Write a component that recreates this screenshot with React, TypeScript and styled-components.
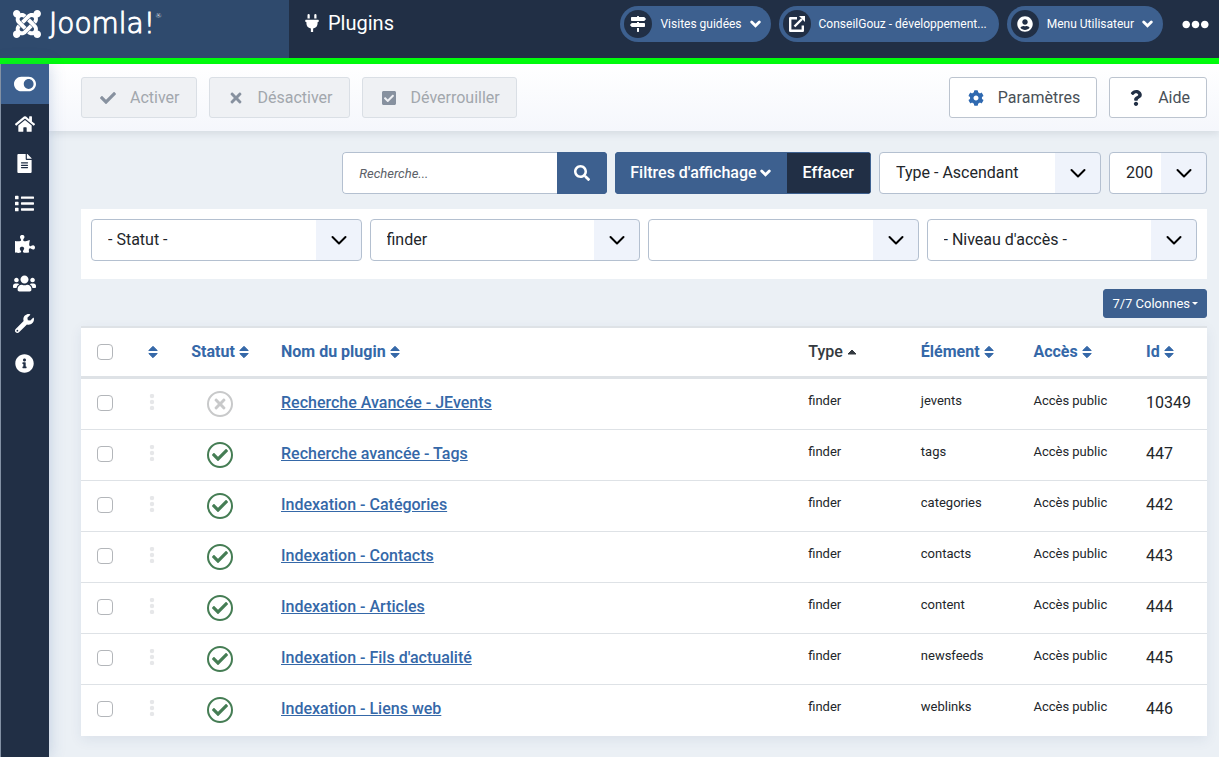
import React from "react";
import styled, { createGlobalStyle, css } from "styled-components";
import {
  FaCheck,
  FaCheckSquare,
  FaCog,
  FaEllipsisH,
  FaFileAlt,
  FaHome,
  FaInfoCircle,
  FaJoomla,
  FaList,
  FaMapSigns,
  FaPlug,
  FaPuzzlePiece,
  FaQuestion,
  FaSearch,
  FaTimes,
  FaToggleOn,
  FaUserCircle,
  FaUsers,
  FaWrench,
} from "react-icons/fa";

const color = {
  navy: "#212f45",
  brand: "#2f4a6d",
  blue: "#3d608f",
  link: "#3568a8",
  text: "#22262a",
  border: "#b4c0d0",
  line: "#dee2e6",
  page: "#ebf0f5",
  green: "#457d54",
};

const GlobalStyle = createGlobalStyle`
  *, *::before, *::after { box-sizing: border-box; }
  body {
    margin: 0;
    background: ${color.page};
    color: ${color.text};
    font: 400 16px/24px Roboto, "Liberation Sans", sans-serif;
  }
  button, input, select { font: inherit; color: inherit; margin: 0; }
  svg { display: block; flex: none; }
`;

const Page = styled.div`
  display: flex;
  flex-direction: column;
  min-height: 100vh;
`;

const Header = styled.header`
  display: flex;
  height: 64px;
  background: ${color.navy};
  border-bottom: 6px solid #00ff0c;
`;

const Brand = styled.a`
  display: flex;
  align-items: flex-start;
  gap: 6px;
  width: 289px;
  padding: 8px 11px;
  background: ${color.brand};
  color: #fff;
  text-decoration: none;
`;

const Wordmark = styled.span`
  display: flex;
  font: 200 28px/32px "DejaVu Sans Light", "DejaVu Sans", sans-serif;
  -webkit-text-stroke: 1px #fff;

  sup {
    font-size: 7px;
    line-height: 16px;
    -webkit-text-stroke: 0;
  }
`;

const PageTitle = styled.h1`
  display: flex;
  align-items: center;
  gap: 7px;
  height: 46px;
  margin: 0;
  padding-left: 14px;
  color: #fff;
  font-size: 20px;
  font-weight: 400;
`;

const HeaderItems = styled.nav`
  display: flex;
  align-items: flex-start;
  gap: 8px;
  margin-left: auto;
  padding: 6px 10px 0 0;
`;

const Pill = styled.button`
  display: flex;
  align-items: center;
  gap: 8px;
  height: 36px;
  padding: 0 10px 0 4px;
  border: 0;
  border-radius: 18px;
  background: ${color.blue};
  color: #fff;
  font-size: 12px;
  font-weight: 400;
  white-space: nowrap;
`;

const PillLink = styled(Pill).attrs({ as: "a", href: "#" })`
  padding-right: 12px;
  text-decoration: none;
`;

const PillIcon = styled.span`
  display: grid;
  place-items: center;
  width: 28px;
  height: 28px;
  border-radius: 50%;
  background: ${color.navy};
`;

const MoreButton = styled.button`
  height: 36px;
  margin-left: 11px;
  padding: 0;
  border: 0;
  background: none;
  color: #fff;
`;

const Body = styled.div`
  display: flex;
  flex: 1;
`;

const Sidebar = styled.nav`
  width: 49px;
  background: ${color.navy};
  border-left: 1px solid #8391a4;
  box-shadow: 0 0 16px rgba(60, 100, 160, 0.25);
  z-index: 1;
`;

const SidebarLink = styled.a<{ $active?: boolean }>`
  display: grid;
  place-items: center;
  height: 40px;
  padding: 0 1px 1px 0;
  color: #fff;
  background: ${(p) => (p.$active ? color.blue : "transparent")};
`;

const Main = styled.main`
  flex: 1;
  min-width: 0;
`;

const Toolbar = styled.div`
  display: flex;
  gap: 12px;
  padding: 13px 12px 13px 32px;
  background: linear-gradient(#ffffff, #f5f7fc);
  box-shadow: 0 2px 8px rgba(33, 47, 69, 0.12);
`;

const ToolbarButton = styled.button<{ $accent?: string }>`
  display: flex;
  align-items: center;
  gap: 14px;
  height: 41px;
  padding: 0 16px 0 18px;
  border: 1px solid #bcc4cf;
  border-radius: 3px;
  background: #fff;
  color: #495057;

  svg {
    color: ${(p) => p.$accent ?? color.navy};
  }
  &:disabled {
    background: #eff1f4;
    border-color: #dadfe5;
    color: #a2a7ad;
  }
  &:disabled svg {
    color: #87919f;
  }
`;

const Spacer = styled.div`
  flex: 1;
`;

const Content = styled.div`
  padding: 21px 12px 22px 32px;
`;

const SearchBar = styled.form`
  display: flex;
  justify-content: flex-end;
  gap: 8px;
`;

const Group = styled.div`
  display: flex;
  height: 42px;
  border-radius: 4px;
  overflow: hidden;
`;

const SearchInput = styled.input`
  width: 215px;
  padding: 0 16px;
  border: 1px solid ${color.border};
  border-right: 0;
  border-radius: 4px 0 0 4px;
  background: #fff;

  &::placeholder {
    color: #5c6168;
    font-size: 13px;
    font-style: italic;
    opacity: 1;
  }
`;

const GroupButton = styled.button<{ $dark?: boolean; $compact?: boolean }>`
  display: flex;
  align-items: center;
  gap: 3px;
  padding: 0 ${(p) => (p.$compact ? 14 : 16)}px;
  border: 1px solid ${color.blue};
  background: ${(p) => (p.$dark ? color.navy : color.blue)};
  color: #fff;
  font-weight: 500;
  white-space: nowrap;
`;

const SelectBox = styled.div<{ $width?: number }>`
  display: grid;
  grid-template-columns: 1fr 46px;
  align-items: center;
  justify-items: center;
  height: 42px;
  min-width: 0;
  ${(p) => p.$width && css`width: ${p.$width}px;`}

  select {
    grid-area: 1 / 1 / 2 / 3;
    width: 100%;
    height: 42px;
    padding: 0 45px 0 16px;
    border: 1px solid ${color.border};
    border-radius: 4px;
    background: linear-gradient(to left, #eff3fb 45px, #fff 45px);
    appearance: none;
  }
  svg {
    grid-area: 1 / 2;
    pointer-events: none;
    z-index: 1;
  }
`;

const FilterPanel = styled.div`
  display: grid;
  grid-template-columns: repeat(4, 1fr);
  gap: 8px;
  margin-top: 15px;
  padding: 10px 10px 18px;
  background: #fff;
`;

const ColumnsButton = styled.button`
  display: flex;
  align-items: center;
  gap: 2px;
  height: 29px;
  margin: 10px 0 8px auto;
  padding: 0 8px;
  border: 1px solid ${color.blue};
  border-radius: 3px;
  background: ${color.blue};
  color: #fff;
  font-size: 13px;
`;

const Table = styled.table`
  width: 100%;
  table-layout: fixed;
  border-spacing: 0;
  border-top: 2px solid ${color.line};
  background: #fff;
  box-shadow: 0 4px 12px rgba(33, 60, 110, 0.08);
`;

const Col = styled.col<{ $width?: string }>`
  width: ${(p) => p.$width ?? "auto"};
`;

const cell = css<{ $center?: boolean; $inset?: boolean }>`
  padding: 12px ${(p) => (p.$center ? 0 : 8)}px 12px
    ${(p) => (p.$inset ? 18 : p.$center ? 0 : 8)}px;
  text-align: ${(p) => (p.$center ? "center" : "left")};
  vertical-align: top;
`;

const HeadCell = styled.th<{ $center?: boolean; $inset?: boolean }>`
  ${cell}
  height: 51px;
  border-bottom: 3px solid ${color.line};
  line-height: 24px;
  font-weight: 500;
  white-space: nowrap;
`;

const Row = styled.tr`
  &:not(:last-child) > td {
    border-bottom: 1px solid ${color.line};
  }
`;

const Cell = styled.td<{ $center?: boolean; $inset?: boolean; $small?: boolean }>`
  ${cell}
  height: 51px;
  font-size: ${(p) => (p.$small ? 13 : 16)}px;
  line-height: ${(p) => (p.$small ? 20 : 23)}px;
`;

const SortLink = styled.a<{ $current?: boolean }>`
  display: inline-flex;
  align-items: center;
  gap: 4px;
  min-height: 23px;
  line-height: 23px;
  vertical-align: top;
  color: ${(p) => (p.$current ? "#343a40" : color.link)};
  font-weight: ${(p) => (p.$current ? 500 : 700)};
  text-decoration: none;
`;

const PluginLink = styled.a`
  color: ${color.link};
  font-weight: 500;
  text-decoration: underline;
`;

const Checkbox = styled.input.attrs({ type: "checkbox" })`
  display: block;
  width: 16px;
  height: 16px;
  margin: 4px auto;
  border: 1px solid #b3b6ba;
  border-radius: 4px;
  background: #fff;
  appearance: none;
`;

const Handle = styled.svg`
  margin: 3px auto 0 20px;
`;

const StatusButton = styled.button<{ $enabled: boolean }>`
  display: grid;
  place-items: center;
  width: 26px;
  height: 26px;
  margin: 0 auto;
  padding: 0;
  border: 2px solid currentColor;
  border-radius: 50%;
  background: #fff;
  color: ${(p) => (p.$enabled ? color.green : "#c8c9ca")};
`;

function Chevron() {
  return (
    <svg width="16" height="16" viewBox="0 0 16 16" fill="none" stroke="#000" strokeWidth="2" strokeLinecap="round" strokeLinejoin="round">
      <path d="M1.500 5l6.500 6.500L14.500 5" />
    </svg>
  );
}

function BoldChevron() {
  return (
    <svg width="11" height="10" viewBox="0 0 11 10" fill="none" stroke="currentColor" strokeWidth="2.800" strokeLinecap="round">
      <path d="M1.700 3L5.500 6.800L9.300 3" />
    </svg>
  );
}

function ExternalIcon() {
  return (
    <svg width="18" height="18" viewBox="0 0 18 18" fill="none" stroke="currentColor" strokeWidth="2.400">
      <path d="M9 3.200H2.200V15.800H14.800V10.500" strokeLinejoin="round" />
      <path d="M6.500 11.500L14 4" />
      <path d="M11 1H17V7z" fill="currentColor" stroke="none" />
    </svg>
  );
}

function SortIcon() {
  return (
    <svg width="10" height="14" viewBox="0 0 10 14" fill="currentColor" stroke="currentColor" strokeLinejoin="round">
      <path d="M0.800 5.500L5 1.300L9.200 5.500zM0.800 8.500L5 12.700L9.200 8.500z" />
    </svg>
  );
}

function AscendingIcon() {
  return (
    <svg width="10" height="6" viewBox="0 0 10 6" fill="currentColor" stroke="currentColor" strokeLinejoin="round">
      <path d="M1 5L5 1L9 5z" />
    </svg>
  );
}

function Select({ label, value, width }: { label: string; value: string; width?: number }) {
  return (
    <SelectBox $width={width}>
      <select aria-label={label} defaultValue={value}>
        <option value={value}>{value}</option>
      </select>
      <Chevron />
    </SelectBox>
  );
}

const menu = [
  { label: "Plugins", icon: <FaToggleOn size={22} /> },
  { label: "Accueil", icon: <FaHome size={20} /> },
  { label: "Contenu", icon: <FaFileAlt size={19} /> },
  { label: "Menus", icon: <FaList size={19} /> },
  { label: "Composants", icon: <FaPuzzlePiece size={20} /> },
  { label: "Utilisateurs", icon: <FaUsers size={23} /> },
  { label: "Système", icon: <FaWrench size={19} /> },
  { label: "Aide", icon: <FaInfoCircle size={19} /> },
];

const plugins = [
  { name: "Recherche Avancée - JEvents", element: "jevents", id: 10349, enabled: false },
  { name: "Recherche avancée - Tags", element: "tags", id: 447, enabled: true },
  { name: "Indexation - Catégories", element: "categories", id: 442, enabled: true },
  { name: "Indexation - Contacts", element: "contacts", id: 443, enabled: true },
  { name: "Indexation - Articles", element: "content", id: 444, enabled: true },
  { name: "Indexation - Fils d'actualité", element: "newsfeeds", id: 445, enabled: true },
  { name: "Indexation - Liens web", element: "weblinks", id: 446, enabled: true },
];

function Sortable({ title }: { title?: string }) {
  return (
    <SortLink href="#" aria-label={title ? undefined : "Ordre"}>
      {title}
      <SortIcon />
    </SortLink>
  );
}

export default function App() {
  return (
    <Page>
      <GlobalStyle />
      <Header>
        <Brand href="#">
          <FaJoomla size={32} />
          <Wordmark>
            Joomla!<sup>®</sup>
          </Wordmark>
        </Brand>
        <PageTitle>
          <FaPlug size={18} />
          Plugins
        </PageTitle>
        <HeaderItems>
          <Pill>
            <PillIcon><FaMapSigns size={16} /></PillIcon>
            Visites guidées
            <BoldChevron />
          </Pill>
          <PillLink>
            <PillIcon><ExternalIcon /></PillIcon>
            ConseilGouz - développement...
          </PillLink>
          <Pill>
            <PillIcon><FaUserCircle size={16} /></PillIcon>
            Menu Utilisateur
            <BoldChevron />
          </Pill>
          <MoreButton aria-label="Plus">
            <FaEllipsisH size={27} />
          </MoreButton>
        </HeaderItems>
      </Header>
      <Body>
        <Sidebar>
          {menu.map((item, i) => (
            <SidebarLink key={item.label} href="#" aria-label={item.label} $active={i === 0}>
              {item.icon}
            </SidebarLink>
          ))}
        </Sidebar>
        <Main>
          <Toolbar>
            <ToolbarButton disabled><FaCheck size={16} />Activer</ToolbarButton>
            <ToolbarButton disabled><FaTimes size={16} />Désactiver</ToolbarButton>
            <ToolbarButton disabled><FaCheckSquare size={16} />Déverrouiller</ToolbarButton>
            <Spacer />
            <ToolbarButton $accent="#2f69b0"><FaCog size={16} />Paramètres</ToolbarButton>
            <ToolbarButton><FaQuestion size={16} />Aide</ToolbarButton>
          </Toolbar>
          <Content>
            <SearchBar onSubmit={(e) => e.preventDefault()}>
              <Group>
                <SearchInput type="text" placeholder="Recherche..." aria-label="Recherche" />
                <GroupButton aria-label="Rechercher"><FaSearch size={16} /></GroupButton>
              </Group>
              <Group>
                <GroupButton type="button" $compact>Filtres d'affichage<BoldChevron /></GroupButton>
                <GroupButton type="button" $dark>Effacer</GroupButton>
              </Group>
              <Select label="Trier par" value="Type - Ascendant" width={222} />
              <Select label="Nombre par page" value="200" width={98} />
            </SearchBar>
            <FilterPanel>
              <Select label="Statut" value="- Statut -" />
              <Select label="Type" value="finder" />
              <Select label="Élément" value="" />
              <Select label="Niveau d'accès" value="- Niveau d'accès -" />
            </FilterPanel>
            <ColumnsButton>
              7/7 Colonnes
              <svg width="6" height="4" viewBox="0 0 6 4" fill="currentColor">
                <path d="M0 0h6L3 3z" />
              </svg>
            </ColumnsButton>
            <Table>
              <colgroup>
                <Col $width="48px" />
                <Col $width="48px" />
                <Col $width="86px" />
                <Col />
                <Col $width="10%" />
                <Col $width="10%" />
                <Col $width="10%" />
                <Col $width="69px" />
              </colgroup>
              <thead>
                <tr>
                  <HeadCell $center><Checkbox aria-label="Tout sélectionner" /></HeadCell>
                  <HeadCell $center><Sortable /></HeadCell>
                  <HeadCell $center><Sortable title="Statut" /></HeadCell>
                  <HeadCell $inset><Sortable title="Nom du plugin" /></HeadCell>
                  <HeadCell>
                    <SortLink href="#" $current>Type<AscendingIcon /></SortLink>
                  </HeadCell>
                  <HeadCell><Sortable title="Élément" /></HeadCell>
                  <HeadCell><Sortable title="Accès" /></HeadCell>
                  <HeadCell><Sortable title="Id" /></HeadCell>
                </tr>
              </thead>
              <tbody>
                {plugins.map((p) => (
                  <Row key={p.id}>
                    <Cell $center><Checkbox aria-label={`Sélectionner ${p.name}`} /></Cell>
                    <Cell $center>
                      <Handle width="6" height="16" viewBox="0 0 6 16" fill="#e6e7e9">
                        <circle cx="3" cy="2" r="2.200" />
                        <circle cx="3" cy="8" r="2.200" />
                        <circle cx="3" cy="14" r="2.200" />
                      </Handle>
                    </Cell>
                    <Cell $center>
                      <StatusButton $enabled={p.enabled} aria-label={p.enabled ? "Désactiver" : "Activer"}>
                        {p.enabled ? <FaCheck size={16} /> : <FaTimes size={16} />}
                      </StatusButton>
                    </Cell>
                    <Cell $inset><PluginLink href="#">{p.name}</PluginLink></Cell>
                    <Cell $small>finder</Cell>
                    <Cell $small>{p.element}</Cell>
                    <Cell $small>Accès public</Cell>
                    <Cell>{p.id}</Cell>
                  </Row>
                ))}
              </tbody>
            </Table>
          </Content>
        </Main>
      </Body>
    </Page>
  );
}
